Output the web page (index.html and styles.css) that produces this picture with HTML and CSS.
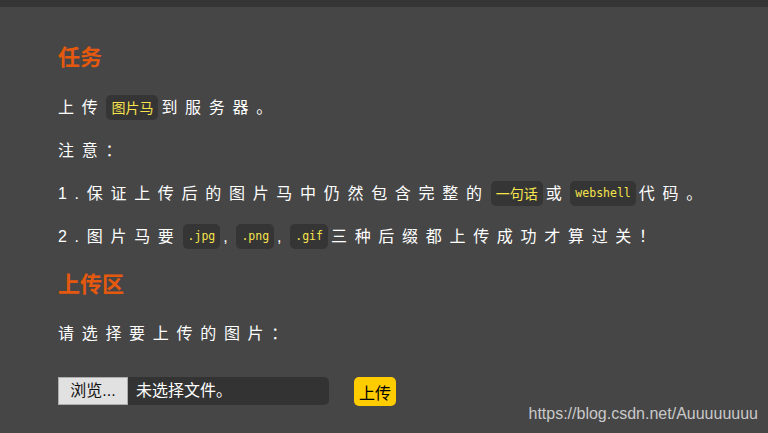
FILE: index.html
```html
<!DOCTYPE html>
<html lang="zh-CN">
<head>
    <meta charset="UTF-8">
    <meta name="viewport" content="width=device-width, initial-scale=1.0">
    <title>Pass-01</title>
    <link rel="stylesheet" href="styles.css">
</head>
<body>
    <div class="topbar"></div>

    <div class="main">
        <h2 class="title">任务</h2>
        <div class="task">
            <p>上传<code>图片马</code>到服务器。</p>
            <p>注意：</p>
            <p>1.保证上传后的图片马中仍然包含完整的<code>一句话</code>或<code class="mono">webshell</code>代码。</p>
            <p>2.图片马要<code class="mono">.jpg</code>,<code class="mono">.png</code>,<code class="mono">.gif</code>三种后缀都上传成功才算过关！</p>
        </div>

        <h2 class="title">上传区</h2>
        <p class="hint">请选择要上传的图片：</p>

        <div class="upload-row">
            <div class="file-box">
                <span class="browse">浏览...</span>
                <span class="file-name">未选择文件。</span>
            </div>
            <button class="upload-btn">上传</button>
        </div>
    </div>

    <div class="watermark">https://blog.csdn.net/Auuuuuuuu</div>
</body>
</html>
```

FILE: styles.css
```css
    body {
        font-family: "Liberation Sans", "Noto Sans CJK SC", sans-serif;
        margin: 0;
        padding: 0;
        background-color: #464646;
        color: #fff;
        height: 100vh;
        overflow: hidden;
    }

    .topbar {
        height: 7px;
        background-color: #353535;
    }

    .main {
        padding: 0 58px;
    }

    .title {
        margin: 36px 0 0;
        font-size: 22px;
        line-height: 30px;
        font-weight: bold;
        color: #e5590f;
    }

    .main .title + .hint {
        margin-top: 12px;
    }

    .task {
        margin-top: 13px;
    }

    .task + .title {
        margin-top: 12px;
    }

    .task p, .hint {
        margin: 0;
        font-size: 16px;
        line-height: 43px;
        letter-spacing: 7.7px;
    }

    code {
        display: inline-block;
        vertical-align: middle;
        margin: -3px 3px 0 1px;
        padding: 0 5px;
        height: 25px;
        line-height: 25px;
        font-family: "Noto Sans CJK SC", sans-serif;
        font-size: 14px;
        letter-spacing: 0;
        color: #f7e44c;
        background-color: #353535;
        border-radius: 5px;
    }

    code.mono {
        font-family: "DejaVu Sans Mono", monospace;
        font-size: 11.5px;
    }

    .upload-row {
        display: flex;
        align-items: flex-start;
        gap: 25px;
        margin-top: 22px;
    }

    .file-box {
        display: flex;
        align-items: stretch;
        width: 271px;
        height: 28px;
        background-color: #333;
        border-radius: 0 5px 5px 0;
    }

    .browse {
        width: 68px;
        border: 1px solid #adadad;
        background-color: #e1e1e1;
        color: #111;
        font-size: 16px;
        line-height: 26px;
        text-align: center;
    }

    .file-name {
        padding-left: 8px;
        font-size: 16px;
        line-height: 28px;
    }

    .upload-btn {
        height: 29px;
        padding: 0 5px;
        border: none;
        border-radius: 5px;
        background-color: #ffcc00;
        color: #000;
        font-family: "Liberation Sans", "Noto Sans CJK SC", sans-serif;
        font-size: 16px;
        cursor: pointer;
    }

    .watermark {
        position: absolute;
        right: 10px;
        bottom: 10px;
        font-size: 16px;
        line-height: 18px;
        color: #c9c9c9;
    }
```
